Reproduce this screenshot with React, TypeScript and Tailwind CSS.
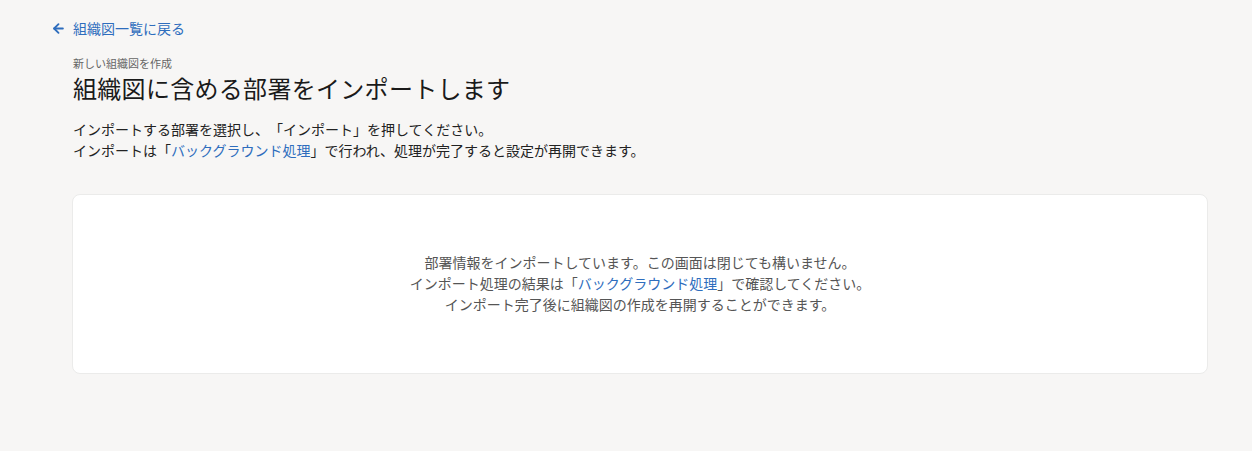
import { ArrowLeft } from "lucide-react";

const font = "font-['Noto_Sans_CJK_JP','Noto_Sans',sans-serif] [text-spacing-trim:space-all]";

export default function App() {
  return (
    <div className={`min-h-[451px] bg-[#f7f6f5] pl-[51px] pr-[44px] pt-[18px] ${font}`}>
      <a href="#" className="flex items-center gap-[7px] text-[14px] leading-[20px] text-[#2e6dbd]">
        <ArrowLeft className="h-[15px] w-[15px]" strokeWidth={3} aria-hidden />
        組織図一覧に戻る
      </a>

      <div className="pl-[22px] pt-[18px]">
        <p className="text-[11px] leading-[14px] text-[#666]">新しい組織図を作成</p>
        <h1 className="mt-[1px] text-[24px] leading-[34px] tracking-[0.3px] text-[#1a1a1a]">
          組織図に含める部署をインポートします
        </h1>
        <div className="mt-[14px] text-[14px] leading-[21px] text-[#222]">
          <p>インポートする部署を選択し、「インポート」を押してください。</p>
          <p>
            インポートは「<a href="#" className="text-[#2e6dbd]">バックグラウンド処理</a>
            」で行われ、処理が完了すると設定が再開できます。
          </p>
        </div>

        <div className="mt-[33px] -ml-[1px] rounded-[8px] border border-[#ebebea] bg-white pt-[57px] pb-[58px] text-center text-[14px] leading-[21px] text-[#555]">
          <p>部署情報をインポートしています。この画面は閉じても構いません。</p>
          <p>
            インポート処理の結果は「<a href="#" className="text-[#2e6dbd]">バックグラウンド処理</a>
            」で確認してください。
          </p>
          <p>インポート完了後に組織図の作成を再開することができます。</p>
        </div>
      </div>
    </div>
  );
}
